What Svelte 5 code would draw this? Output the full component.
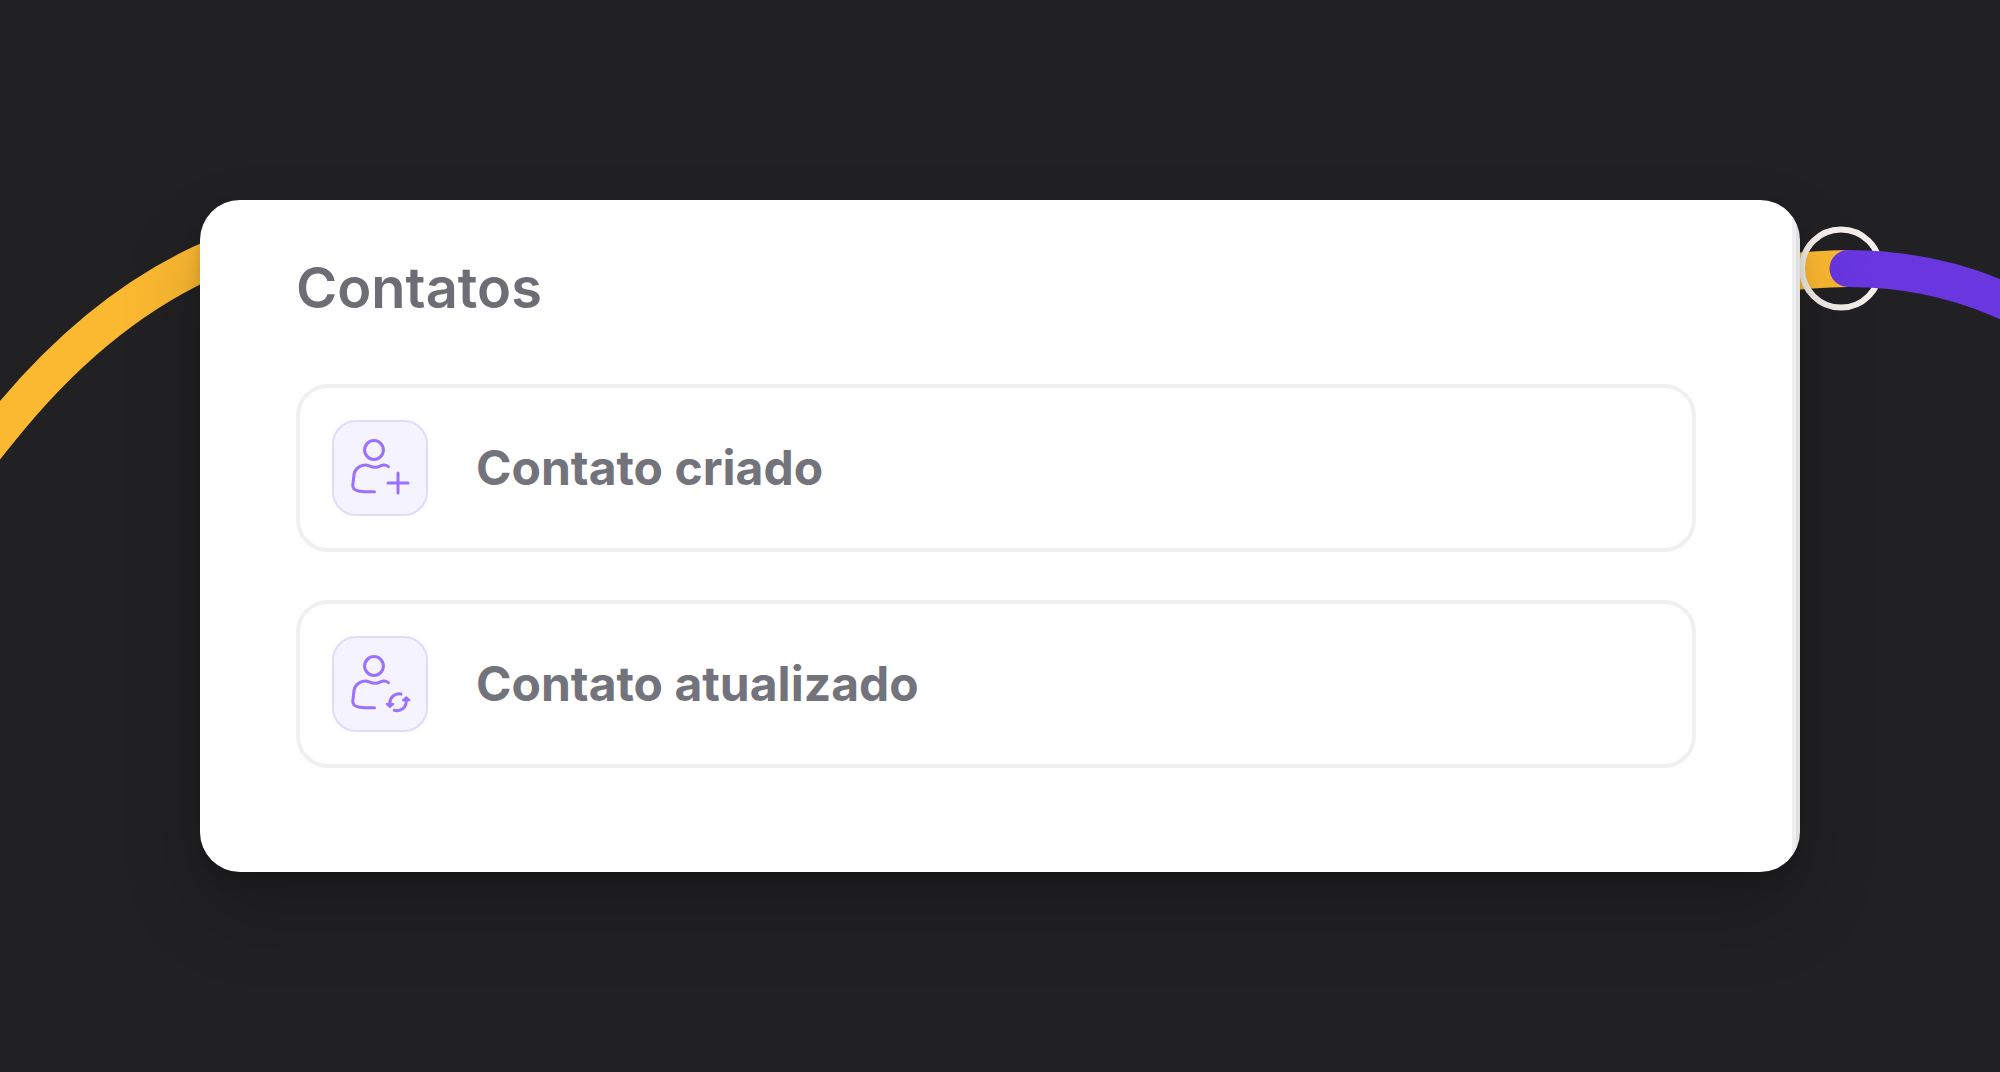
<script lang="ts">
	const title = 'Contatos';

	const triggers = [
		{ id: 'created', label: 'Contato criado' },
		{ id: 'updated', label: 'Contato atualizado' }
	];
</script>

<main class="stage">
	<svg class="lines" viewBox="0 0 2000 1072" preserveAspectRatio="xMidYMin slice" aria-hidden="true">
		<path class="yellow" d="M-40 480L0 430Q92 315 200 264L240 246" />
		<path class="yellow" d="M1760 276Q1804 269 1848 268.5" />
		<circle class="ring" cx="1841" cy="268.5" r="39" />
		<path class="purple" d="M1848 268.5Q1929 268.5 2000 299L2030 312" />
	</svg>

	<section class="card">
		<h2>{title}</h2>
		<div class="list">
			{#each triggers as trigger (trigger.id)}
				<button type="button" class="trigger">
					<span class="icon">
						<svg viewBox="0 0 96 96" aria-hidden="true">
							<circle cx="42" cy="30" r="9.4" />
							<path
								d="M56.5 46.6C54 44.8 51.5 44.4 49 45.6C45 47.8 41 47.8 37.5 46C34.5 44.4 31 44.8 28 46.4C24.3 48.4 22.3 51 22 55L20.8 64.5C20.4 68.5 22.5 70.2 26.5 70.9C31.5 71.7 37 71.8 42.5 71.8"
							/>
							{#if trigger.id === 'created'}
								<path d="M66 53V73M56 63H76" />
							{:else}
								<path class="thin" d="M69 58C62.5 57 57.7 61.5 57.7 68" />
								<path class="thin" d="M62.3 74.3C69 76 74.4 71.5 74.3 64.5" />
								<path class="tip" d="M54.7 67.9H61.3L57.9 70.9ZM70.9 64.3H77.5L74.3 61.3Z" />
							{/if}
						</svg>
					</span>
					<span>{trigger.label}</span>
				</button>
			{/each}
		</div>
	</section>
</main>

<style>
	:global(body) {
		margin: 0;
		background: #212123;
	}

	.stage {
		position: relative;
		min-height: 100vh;
		box-sizing: border-box;
		padding: 200px 10%;
		overflow: hidden;
		font-family: Inter, 'Liberation Sans', sans-serif;
	}

	.lines {
		position: absolute;
		inset: 0;
		width: 100%;
		height: 100%;
		fill: none;
		stroke-width: 37;
	}

	.yellow {
		stroke: #fbb931;
	}

	.purple {
		stroke: #6936e0;
		stroke-linecap: round;
	}

	.ring {
		stroke: #f4efeb;
		stroke-width: 6;
	}

	.card {
		position: relative;
		box-sizing: border-box;
		padding: 56px 104px 104px 96px;
		border-radius: 40px;
		background: linear-gradient(to left, #e0e0e0 4px, #efefef 4px, #efefef 8px, #fff 8px);
		box-shadow:
			0 8px 16px rgba(0, 0, 0, 0.15),
			0 40px 80px rgba(0, 0, 0, 0.2);
	}

	h2 {
		margin: 0 0 64px;
		font-size: 56px;
		line-height: 64px;
		font-weight: 600;
		color: #6d6d76;
	}

	.list {
		display: flex;
		flex-direction: column;
		gap: 48px;
	}

	.trigger {
		display: flex;
		align-items: center;
		gap: 48px;
		padding: 32px;
		border: 4px solid #f0f0f0;
		border-radius: 32px;
		background: #fff;
		color: #73737c;
		font-family: inherit;
		font-size: 48px;
		line-height: 64px;
		font-weight: 700;
		text-align: left;
		cursor: pointer;
	}

	.icon {
		display: flex;
		box-sizing: border-box;
		width: 96px;
		height: 96px;
		border: 2px solid #e1dafe;
		border-radius: 24px;
		background: #f5f3ff;
	}

	.icon svg {
		flex: none;
		width: 96px;
		height: 96px;
		margin: -2px;
		fill: none;
		stroke: #9b70fa;
		stroke-width: 3;
		stroke-linecap: round;
		stroke-linejoin: round;
	}

	.icon .tip {
		fill: #9b70fa;
		stroke-width: 2;
	}
</style>
